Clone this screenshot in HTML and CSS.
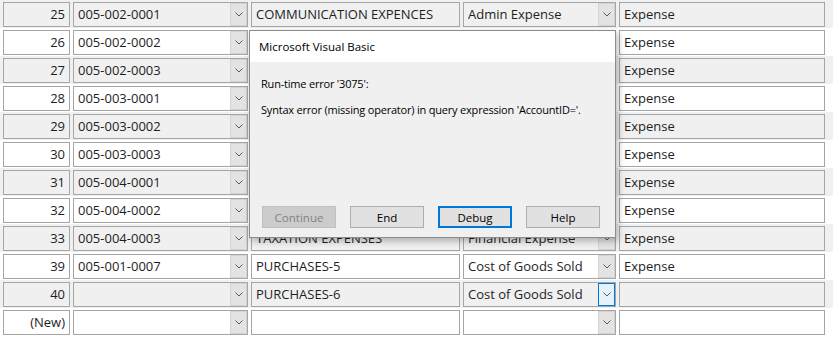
FILE: index.html
```html
<!DOCTYPE html>
<html lang="en">
<head>
    <meta charset="UTF-8">
    <title>Accounts</title>
    <link rel="stylesheet" href="styles.css">
</head>
<body>
    <div class="sheet">
        <div class="row alt">
            <div class="cell c-id">25</div>
            <div class="cell c-acc combo"><span class="val">005-002-0001</span><span class="drop"><svg width="8" height="5" viewBox="0 0 8 5"><polyline points="0.5,0.5 4,4 7.5,0.5"/></svg></span></div>
            <div class="cell c-name">COMMUNICATION EXPENCES</div>
            <div class="cell c-type combo"><span class="val">Admin Expense</span><span class="drop"><svg width="8" height="5" viewBox="0 0 8 5"><polyline points="0.5,0.5 4,4 7.5,0.5"/></svg></span></div>
            <div class="cell c-cat">Expense</div>
        </div>
        <div class="row">
            <div class="cell c-id">26</div>
            <div class="cell c-acc combo"><span class="val">005-002-0002</span><span class="drop"><svg width="8" height="5" viewBox="0 0 8 5"><polyline points="0.5,0.5 4,4 7.5,0.5"/></svg></span></div>
            <div class="cell c-name">POSTAGE &amp; COURIER</div>
            <div class="cell c-type combo"><span class="val">Admin Expense</span><span class="drop"><svg width="8" height="5" viewBox="0 0 8 5"><polyline points="0.5,0.5 4,4 7.5,0.5"/></svg></span></div>
            <div class="cell c-cat">Expense</div>
        </div>
        <div class="row alt">
            <div class="cell c-id">27</div>
            <div class="cell c-acc combo"><span class="val">005-002-0003</span><span class="drop"><svg width="8" height="5" viewBox="0 0 8 5"><polyline points="0.5,0.5 4,4 7.5,0.5"/></svg></span></div>
            <div class="cell c-name">INTERNET CHARGES</div>
            <div class="cell c-type combo"><span class="val">Admin Expense</span><span class="drop"><svg width="8" height="5" viewBox="0 0 8 5"><polyline points="0.5,0.5 4,4 7.5,0.5"/></svg></span></div>
            <div class="cell c-cat">Expense</div>
        </div>
        <div class="row">
            <div class="cell c-id">28</div>
            <div class="cell c-acc combo"><span class="val">005-003-0001</span><span class="drop"><svg width="8" height="5" viewBox="0 0 8 5"><polyline points="0.5,0.5 4,4 7.5,0.5"/></svg></span></div>
            <div class="cell c-name">ADVERTISEMENT</div>
            <div class="cell c-type combo"><span class="val">Selling Expense</span><span class="drop"><svg width="8" height="5" viewBox="0 0 8 5"><polyline points="0.5,0.5 4,4 7.5,0.5"/></svg></span></div>
            <div class="cell c-cat">Expense</div>
        </div>
        <div class="row alt">
            <div class="cell c-id">29</div>
            <div class="cell c-acc combo"><span class="val">005-003-0002</span><span class="drop"><svg width="8" height="5" viewBox="0 0 8 5"><polyline points="0.5,0.5 4,4 7.5,0.5"/></svg></span></div>
            <div class="cell c-name">CARRIAGE OUTWARD</div>
            <div class="cell c-type combo"><span class="val">Selling Expense</span><span class="drop"><svg width="8" height="5" viewBox="0 0 8 5"><polyline points="0.5,0.5 4,4 7.5,0.5"/></svg></span></div>
            <div class="cell c-cat">Expense</div>
        </div>
        <div class="row">
            <div class="cell c-id">30</div>
            <div class="cell c-acc combo"><span class="val">005-003-0003</span><span class="drop"><svg width="8" height="5" viewBox="0 0 8 5"><polyline points="0.5,0.5 4,4 7.5,0.5"/></svg></span></div>
            <div class="cell c-name">SALES COMMISSION</div>
            <div class="cell c-type combo"><span class="val">Selling Expense</span><span class="drop"><svg width="8" height="5" viewBox="0 0 8 5"><polyline points="0.5,0.5 4,4 7.5,0.5"/></svg></span></div>
            <div class="cell c-cat">Expense</div>
        </div>
        <div class="row alt">
            <div class="cell c-id">31</div>
            <div class="cell c-acc combo"><span class="val">005-004-0001</span><span class="drop"><svg width="8" height="5" viewBox="0 0 8 5"><polyline points="0.5,0.5 4,4 7.5,0.5"/></svg></span></div>
            <div class="cell c-name">BANK CHARGES</div>
            <div class="cell c-type combo"><span class="val">Financial Expense</span><span class="drop"><svg width="8" height="5" viewBox="0 0 8 5"><polyline points="0.5,0.5 4,4 7.5,0.5"/></svg></span></div>
            <div class="cell c-cat">Expense</div>
        </div>
        <div class="row">
            <div class="cell c-id">32</div>
            <div class="cell c-acc combo"><span class="val">005-004-0002</span><span class="drop"><svg width="8" height="5" viewBox="0 0 8 5"><polyline points="0.5,0.5 4,4 7.5,0.5"/></svg></span></div>
            <div class="cell c-name">INTEREST EXPENSES</div>
            <div class="cell c-type combo"><span class="val">Financial Expense</span><span class="drop"><svg width="8" height="5" viewBox="0 0 8 5"><polyline points="0.5,0.5 4,4 7.5,0.5"/></svg></span></div>
            <div class="cell c-cat">Expense</div>
        </div>
        <div class="row alt">
            <div class="cell c-id">33</div>
            <div class="cell c-acc combo"><span class="val">005-004-0003</span><span class="drop"><svg width="8" height="5" viewBox="0 0 8 5"><polyline points="0.5,0.5 4,4 7.5,0.5"/></svg></span></div>
            <div class="cell c-name">TAXATION EXPENSES</div>
            <div class="cell c-type combo"><span class="val">Financial Expense</span><span class="drop"><svg width="8" height="5" viewBox="0 0 8 5"><polyline points="0.5,0.5 4,4 7.5,0.5"/></svg></span></div>
            <div class="cell c-cat">Expense</div>
        </div>
        <div class="row">
            <div class="cell c-id">39</div>
            <div class="cell c-acc combo"><span class="val">005-001-0007</span><span class="drop"><svg width="8" height="5" viewBox="0 0 8 5"><polyline points="0.5,0.5 4,4 7.5,0.5"/></svg></span></div>
            <div class="cell c-name">PURCHASES-5</div>
            <div class="cell c-type combo"><span class="val">Cost of Goods Sold</span><span class="drop"><svg width="8" height="5" viewBox="0 0 8 5"><polyline points="0.5,0.5 4,4 7.5,0.5"/></svg></span></div>
            <div class="cell c-cat">Expense</div>
        </div>
        <div class="row alt">
            <div class="cell c-id">40</div>
            <div class="cell c-acc combo"><span class="val"></span><span class="drop"><svg width="8" height="5" viewBox="0 0 8 5"><polyline points="0.5,0.5 4,4 7.5,0.5"/></svg></span></div>
            <div class="cell c-name">PURCHASES-6</div>
            <div class="cell c-type combo"><span class="val">Cost of Goods Sold</span><span class="drop focus"><svg width="8" height="5" viewBox="0 0 8 5"><polyline points="0.5,0.5 4,4 7.5,0.5"/></svg></span></div>
            <div class="cell c-cat"></div>
        </div>
        <div class="row">
            <div class="cell c-id new">(New)</div>
            <div class="cell c-acc combo"><span class="val"></span><span class="drop"><svg width="8" height="5" viewBox="0 0 8 5"><polyline points="0.5,0.5 4,4 7.5,0.5"/></svg></span></div>
            <div class="cell c-name"></div>
            <div class="cell c-type combo"><span class="val"></span><span class="drop"><svg width="8" height="5" viewBox="0 0 8 5"><polyline points="0.5,0.5 4,4 7.5,0.5"/></svg></span></div>
            <div class="cell c-cat"></div>
        </div>

        <div class="dialog">
            <div class="dlg-title">Microsoft Visual Basic</div>
            <div class="dlg-body">
                <p>Run-time error '3075':</p>
                <p>Syntax error (missing operator) in query expression 'AccountID='.</p>
            </div>
            <div class="dlg-buttons">
                <button class="btn" disabled>Continue</button>
                <button class="btn">End</button>
                <button class="btn default">Debug</button>
                <button class="btn">Help</button>
            </div>
        </div>
    </div>
</body>
</html>
```

FILE: styles.css
```css
body {
    margin: 0;
    background-color: #fff;
    font-family: "Open Sans", "Noto Sans", sans-serif;
    color: #1e1e1e;
    overflow: hidden;
}
.sheet {
    position: relative;
    width: 833px;
}
.row {
    display: flex;
    gap: 3px;
    height: 28px;
    box-sizing: border-box;
    padding: 2px 0 1px 3px;
    background-color: #fff;
}
.row.alt {
    background-color: #f0f0f0;
}
.cell {
    box-sizing: border-box;
    height: 25px;
    border: 1px solid #a5a5a5;
    background-color: #fff;
    font-size: 13px;
    line-height: 23px;
    padding: 0 4px;
    white-space: nowrap;
    overflow: hidden;
}
.row.alt .cell {
    background-color: #f0f0f0;
}
.c-id {
    width: 67px;
    text-align: right;
}
.c-acc { width: 175px; }
.c-name { width: 209px; }
.c-type { width: 153px; }
.c-cat { width: 206px; }
.combo {
    display: flex;
    padding-right: 0;
}
.combo .val {
    flex: 1;
    overflow: hidden;
}
.drop {
    width: 17px;
    height: 23px;
    box-sizing: border-box;
    border: 1px solid #d4d4d4;
    background-color: #e3e3e3;
    display: flex;
    align-items: center;
    justify-content: center;
}
.drop svg {
    fill: none;
    stroke: #5a5a5a;
    stroke-width: 1;
}
.drop.focus {
    border-color: #0078d7;
    background-color: #e5f1fb;
}

/* error box */
.dialog {
    position: absolute;
    left: 249px;
    top: 30px;
    width: 367px;
    height: 208px;
    box-sizing: border-box;
    border: 1px solid #8c8c8c;
    background-color: #f0f0f0;
    box-shadow: 2px 3px 7px rgba(0,0,0,0.28);
    font-size: 11px;
    color: #000;
}
.dlg-title {
    height: 31px;
    line-height: 31px;
    background-color: #fff;
    padding-left: 9px;
    font-size: 11.5px;
}
.dlg-body {
    padding: 14px 0 0 11px;
}
.dlg-body p {
    margin: 0 0 10px;
    line-height: 16px;
    white-space: nowrap;
    letter-spacing: -0.2px;
}
.dlg-buttons {
    position: absolute;
    left: 12px;
    top: 175px;
    display: flex;
    gap: 14px;
}
.btn {
    width: 74px;
    height: 22px;
    box-sizing: border-box;
    border: 1px solid #adadad;
    background-color: #e1e1e1;
    font-family: inherit;
    font-size: 11.5px;
    color: #000;
    padding: 0;
}
.btn.default {
    border: 2px solid #0078d7;
}
.btn:disabled {
    background-color: #cccccc;
    border-color: #bfbfbf;
    color: #838383;
}
```
